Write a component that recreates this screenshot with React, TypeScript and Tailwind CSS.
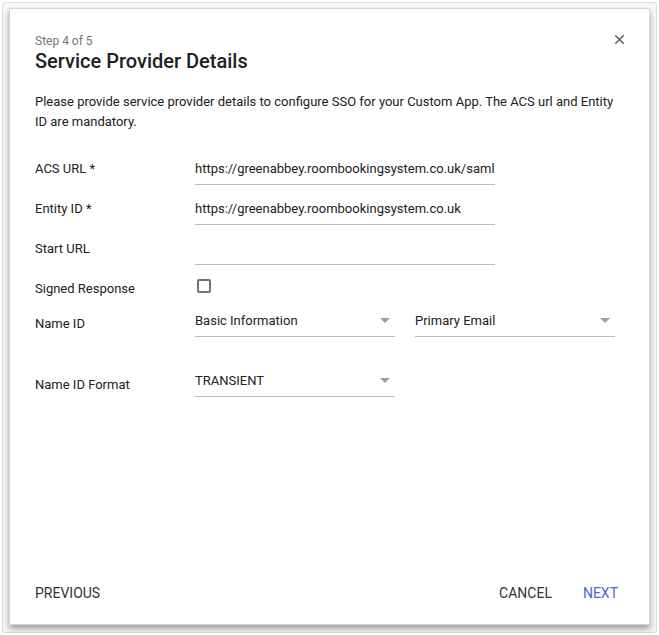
import { X } from "lucide-react";

function Caret() {
  return (
    <svg width="10" height="5" viewBox="0 0 10 5" className="shrink-0">
      <path d="M0 0h10L5 5z" fill="#9e9e9e" />
    </svg>
  );
}

function TextField({ value }: { value: string }) {
  return (
    <div className="w-[300px] h-[32px] border-b border-[#bdbdbd] flex items-center overflow-hidden whitespace-nowrap text-[13px] text-[#212121]">
      {value}
    </div>
  );
}

function Select({ value }: { value: string }) {
  return (
    <div className="w-[200px] h-[32px] border-b border-[#bdbdbd] flex items-center justify-between pr-[5px] text-[13px] text-[#212121]">
      <span>{value}</span>
      <Caret />
    </div>
  );
}

export default function App() {
  return (
    <div
      className="h-[635px] w-[659px] bg-white p-[2px]"
      style={{ fontFamily: "Roboto, 'Liberation Sans', sans-serif" }}
    >
      <div className="h-full w-full rounded-[3px] border border-[#dcdcdc] bg-[#f7f7f7] pl-[6px] pr-[6px] pt-[5px] pb-[6px]">
        <div className="relative flex h-[617px] w-[641px] flex-col bg-white border border-[#d6d6d6] shadow-[0_4px_6px_rgba(0,0,0,0.35)]">
          <button className="absolute right-[22px] top-[23px] text-[#616161]">
            <X size={15} strokeWidth={2.5} />
          </button>

          <div className="px-[25px] pt-[24px]">
            <div className="text-[12px] leading-[16px] text-[#757575]">Step 4 of 5</div>
            <h1 className="mt-[-2px] text-[20px] leading-[28px] font-medium text-[#212121]">
              Service Provider Details
            </h1>
            <p className="mt-[17px] text-[13px] leading-[20px] text-[#212121]">
              Please provide service provider details to configure SSO for your Custom App. The ACS url and Entity ID are mandatory.
            </p>
          </div>

          <div className="mt-[17px] flex flex-col px-[25px] text-[13px] text-[#212121]">
            <div className="flex items-center h-[40px]">
              <div className="w-[160px]">ACS URL *</div>
              <TextField value="https://greenabbey.roombookingsystem.co.uk/saml" />
            </div>
            <div className="flex items-center h-[40px]">
              <div className="w-[160px]">Entity ID *</div>
              <TextField value="https://greenabbey.roombookingsystem.co.uk" />
            </div>
            <div className="flex items-center h-[40px]">
              <div className="w-[160px]">Start URL</div>
              <TextField value="" />
            </div>
            <div className="flex items-center h-[40px]">
              <div className="w-[160px]">Signed Response</div>
              <div className="ml-[2px] mb-[6px] h-[14px] w-[14px] rounded-[2px] border-2 border-[#757575]" />
            </div>
            <div className="flex items-end h-[32px] mt-[-4px]">
              <div className="w-[160px] pb-[4px]">Name ID</div>
              <Select value="Basic Information" />
              <div className="ml-[20px]">
                <Select value="Primary Email" />
              </div>
            </div>
            <div className="flex items-end h-[32px] mt-[28px]">
              <div className="w-[160px] pb-[3px]">Name ID Format</div>
              <Select value="TRANSIENT" />
            </div>
          </div>

          <div className="mt-auto flex items-center justify-between pl-[25px] pr-[31px] pb-[20px] text-[14px]">
            <button className="text-[#333333]">PREVIOUS</button>
            <div className="flex items-center gap-[31px]">
              <button className="text-[#333333]">CANCEL</button>
              <button className="text-[#4a66d6]">NEXT</button>
            </div>
          </div>
        </div>
      </div>
    </div>
  );
}
